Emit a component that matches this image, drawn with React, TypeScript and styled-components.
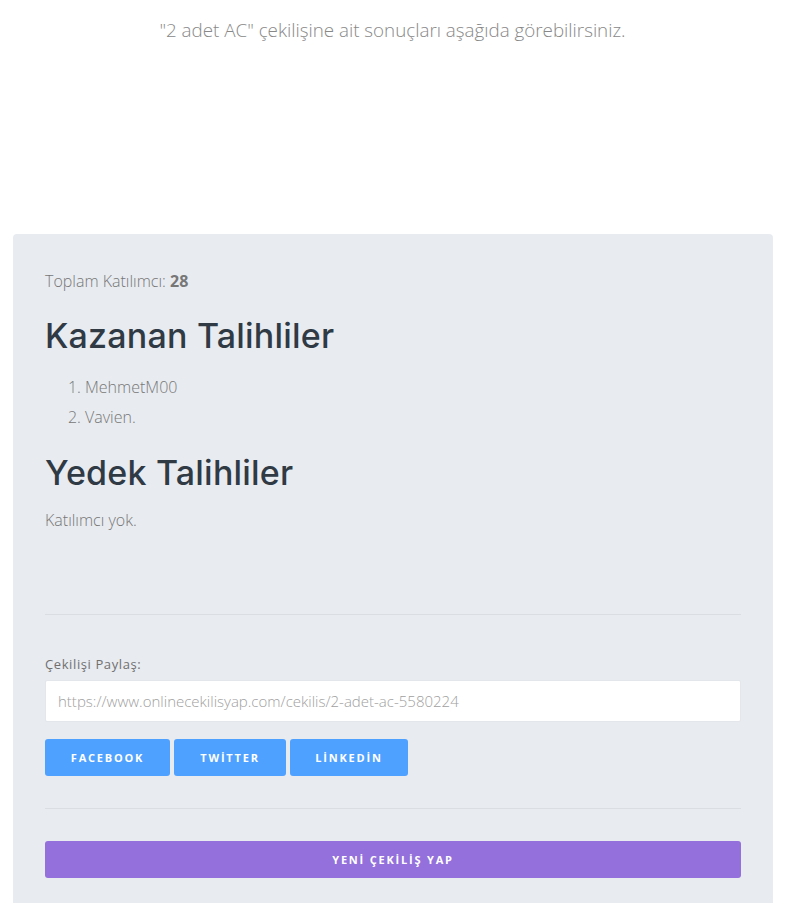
import React from 'react';
import styled, { createGlobalStyle } from 'styled-components';

const Global = createGlobalStyle`
  body {
    margin: 0;
    background: #fff;
    font-family: 'Open Sans', 'Liberation Sans', sans-serif;
  }
`;

const Page = styled.div`
  display: flex;
  flex-direction: column;
`;

const Intro = styled.p`
  margin: 17px 12px 0 0;
  text-align: center;
  font-size: 18.8px;
  font-weight: 300;
  color: #888;
  height: 217px;
`;

const Panel = styled.div`
  margin: 0 24px 0 13px;
  background: #e8ebf0;
  border-radius: 4px 4px 0 0;
  padding: 36px 32px 40px;
  color: #6f6f6f;
`;

const Count = styled.div`
  font-size: 16px;
  font-weight: 300;
  color: #777;
  b {
    font-weight: 700;
  }
`;

const Heading = styled.h2`
  font-family: 'Inter', 'Open Sans', sans-serif;
  font-weight: 500;
  font-size: 34px;
  letter-spacing: 0.2px;
  color: #2f3a45;
  margin: ${p => (p.$first ? '22px' : '19px')} 0 14px;
  line-height: 1.3;
`;

const Winners = styled.ol`
  margin: 0;
  padding-left: 40px;
  font-size: 16px;
  font-weight: 300;
  color: #777;
  li {
    line-height: 30px;
  }
`;

const Empty = styled.p`
  margin: 0;
  font-size: 16px;
  font-weight: 300;
  color: #777;
`;

const Divider = styled.hr`
  border: 0;
  border-top: 1px solid #dadde2;
  margin: ${p => p.$top} 0 ${p => p.$bottom};
`;

const Label = styled.label`
  display: block;
  font-size: 13px;
  font-weight: 400;
  letter-spacing: 0.6px;
  color: #707070;
  margin-bottom: 7px;
`;

const LinkInput = styled.input`
  display: block;
  box-sizing: border-box;
  width: 100%;
  height: 42px;
  border: 1px solid #e3e6ea;
  border-radius: 2px;
  background: #fff;
  padding: 0 12px;
  font-family: 'Open Sans', sans-serif;
  font-size: 15px;
  font-weight: 300;
  color: #a0a0a0;
  outline: none;
`;

const Shares = styled.div`
  display: flex;
  gap: 4px;
  margin-top: 17px;
`;

const Button = styled.button`
  height: 37px;
  width: ${p => p.$w || 'auto'};
  border: 0;
  border-radius: 3px;
  background: ${p => p.$bg};
  color: #fff;
  font-family: 'Open Sans', sans-serif;
  font-size: 11px;
  font-weight: 700;
  letter-spacing: 1.8px;
  text-transform: uppercase;
  cursor: pointer;
  padding: 0;
`;

export default function App() {
  const url = 'https://www.onlinecekilisyap.com/cekilis/2-adet-ac-5580224';
  return (
    <Page>
      <Global />
      <Intro>"2 adet AC" çekilişine ait sonuçları aşağıda görebilirsiniz.</Intro>
      <Panel>
        <Count>
          Toplam Katılımcı: <b>28</b>
        </Count>
        <Heading $first>Kazanan Talihliler</Heading>
        <Winners>
          <li>MehmetM00</li>
          <li>Vavien.</li>
        </Winners>
        <Heading>Yedek Talihliler</Heading>
        <Empty>Katılımcı yok.</Empty>
        <Divider $top="83px" $bottom="40px" />
        <Label>Çekilişi Paylaş:</Label>
        <LinkInput readOnly value={url} />
        <Shares>
          <Button $bg="#4fa1ff" $w="125px">FACEBOOK</Button>
          <Button $bg="#4fa1ff" $w="112px">TWİTTER</Button>
          <Button $bg="#4fa1ff" $w="118px">LİNKEDİN</Button>
        </Shares>
        <Divider $top="32px" $bottom="32px" />
        <Button $bg="#9370db" $w="100%">YENİ ÇEKİLİŞ YAP</Button>
      </Panel>
    </Page>
  );
}
